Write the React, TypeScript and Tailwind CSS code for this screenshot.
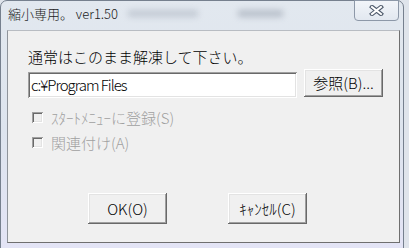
const raised =
  'shadow-[inset_-1px_-1px_0_#696969,inset_1px_1px_0_#ffffff,inset_-2px_-2px_0_#a0a0a0,inset_2px_2px_0_#e3e3e3]';
const sunken =
  'shadow-[inset_1px_1px_0_#a0a0a0,inset_-1px_-1px_0_#ffffff,inset_2px_2px_0_#696969,inset_-2px_-2px_0_#e3e3e3]';

const CloseGlyph = () => (
  <svg width="15" height="11" viewBox="0 0 15 11">
    <path d="M3 2 L12 9 M12 2 L3 9" stroke="#4f5b6c" strokeWidth="4.2" strokeLinecap="square" />
    <path d="M3 2 L12 9 M12 2 L3 9" stroke="#ffffff" strokeWidth="2" strokeLinecap="square" />
  </svg>
);

const Check = ({ label }: { label: string }) => (
  <div className="flex items-center h-[20px] pl-[24px] text-[#a0a0a0]">
    <div className={`w-[11px] h-[11px] bg-[#f0f0f0] -mt-[2px] ${sunken}`} />
    <span className="ml-[8px]">{label}</span>
  </div>
);

export default function App() {
  return (
    <div className="w-[409px] h-[248px] overflow-hidden bg-[#dfe4eb] font-['Noto_Sans_CJK_JP','Liberation_Sans',sans-serif] font-light text-[15px] leading-[20px] text-black">
      <div className="w-[404px] h-[260px] rounded-t-[7px] border border-[#76808e] bg-gradient-to-b from-[#e2e8ef] via-[#dde4ee] to-[#e4e4f6] flex flex-col pl-[6px] pr-[3px]">
        {/* title bar */}
        <div className="h-[29px] flex items-start">
          <span className="mt-[5px] ml-[1px] text-[13px] leading-[16px] text-[#1b1b1b] whitespace-pre">
            縮小専用。 ver1.50
          </span>
          <div className="mt-[9px] ml-[10px] w-[70px] h-[7px] bg-[#aeb6c2] blur-[3px] opacity-60" />
          <div className="mt-[9px] ml-[40px] w-[45px] h-[7px] bg-[#9aa3b0] blur-[3px] opacity-60" />
          <div className="ml-auto mr-[1px] -mt-[1px] w-[45px] h-[21px] rounded-b-[4px] border border-[#8d98a8] bg-gradient-to-b from-[#f2f5f9] to-[#e2e8f0] flex items-center justify-center">
            <CloseGlyph />
          </div>
        </div>

        {/* client area */}
        <div className="h-[213px] bg-[#f0f0f0] border border-t-[#b8bcc2] border-l-[#8f949b] border-r-[#6f6f6f] border-b-[#6f6f6f] flex flex-col pt-[16px]">
          <div className="pl-[20px]">通常はこのまま解凍して下さい。</div>

          <div className="flex items-start pl-[20px] mt-[2px]">
            <div className={`mt-[3px] w-[269px] h-[26px] bg-white pl-[3px] flex items-center tracking-[-1px] ${sunken}`}>
              c:¥Program Files
            </div>
            <div className={`ml-[7px] w-[79px] h-[28px] bg-[#f0f0f0] flex items-center justify-center ${raised}`}>
              参照(B)...
            </div>
          </div>

          <div className="mt-[10px]">
            <Check label="ｽﾀｰﾄﾒﾆｭｰに登録(S)" />
          </div>
          <div className="mt-[5px]">
            <Check label="関連付け(A)" />
          </div>

          <div className="flex mt-[40px] pl-[80px] gap-[61px]">
            <div className={`w-[79px] h-[31px] bg-[#f0f0f0] flex items-center justify-center ${raised}`}>
              OK(O)
            </div>
            <div className={`w-[79px] h-[31px] bg-[#f0f0f0] flex items-center justify-center ${raised}`}>
              ｷｬﾝｾﾙ(C)
            </div>
          </div>
        </div>
      </div>
    </div>
  );
}
